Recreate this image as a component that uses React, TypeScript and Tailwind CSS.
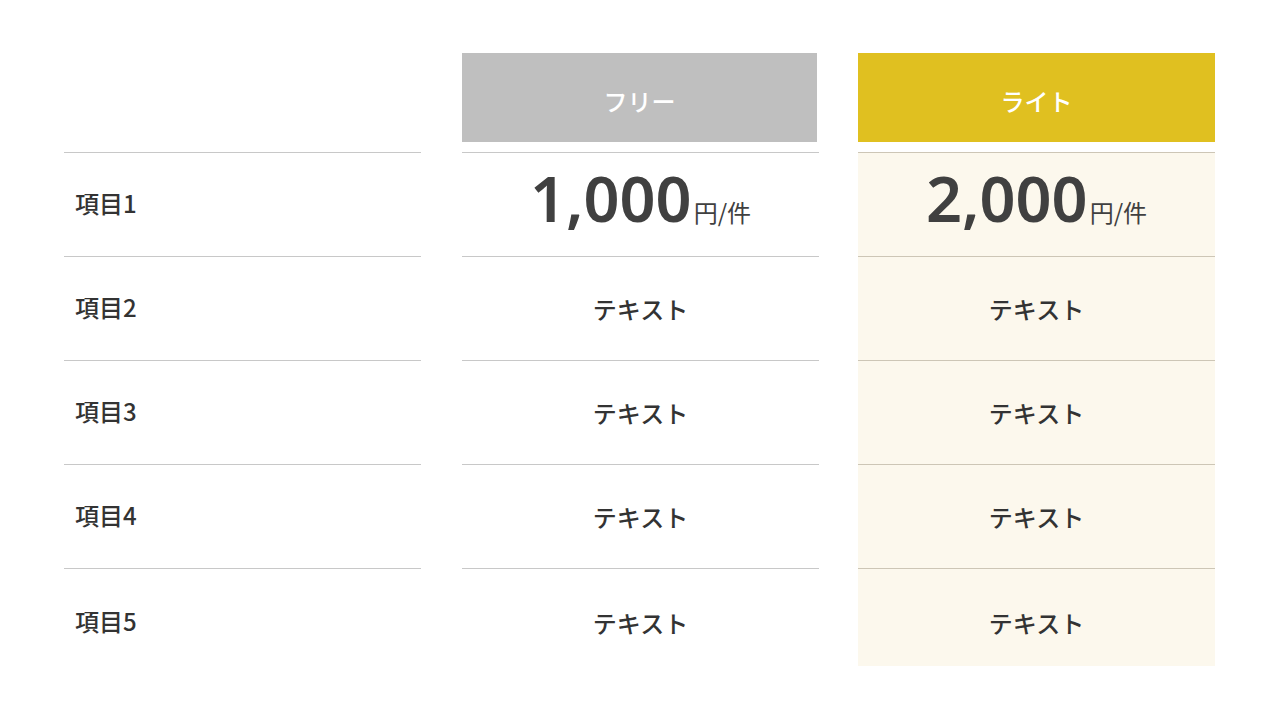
import React from 'react';

const jp = { fontFamily: '"Noto Sans CJK JP", "Noto Sans", sans-serif' };

const rows = ['項目1', '項目2', '項目3', '項目4', '項目5'];

interface PlanProps {
  name: string;
  price: string;
  headerClass: string;
  bodyClass: string;
}

const Cell: React.FC<{ last?: boolean; children: React.ReactNode; center?: boolean }> = ({ last, children, center }) => (
  <div
    className={`border-t border-[#c8c8c8] flex items-center ${center ? 'justify-center' : 'pl-[11px]'} ${
      last ? 'h-[98px] pt-[11px]' : 'h-[104px]'
    }`}
  >
    {children}
  </div>
);

const Plan: React.FC<PlanProps> = ({ name, price, headerClass, bodyClass }) => (
  <div className="w-[357px] flex flex-col">
    <div className={`h-[89px] flex items-center justify-center pt-[6px] text-white text-[24px] font-medium ${headerClass}`}>
      {name}
    </div>
    <div className={`mt-[10px] ${bodyClass}`}>
      <Cell center>
        <div className="flex items-baseline text-[#404040] pb-[14px]">
          <span className="text-[63px] font-semibold leading-none" style={{ fontFamily: '"Noto Sans", sans-serif' }}>
            {price}
          </span>
          <span className="text-[24px] ml-[2px]">円/件</span>
        </div>
      </Cell>
      {[1, 2, 3].map(i => (
        <Cell key={i} center>
          <span className="text-[24px] font-medium text-[#333]">テキスト</span>
        </Cell>
      ))}
      <Cell center last>
        <span className="text-[24px] font-medium text-[#333]">テキスト</span>
      </Cell>
    </div>
  </div>
);

export default function App() {
  return (
    <div className="w-[1280px] h-[720px] bg-white flex pl-[64px] pt-[53px]" style={jp}>
      <div className="w-[357px] flex flex-col mr-[41px]">
        <div className="h-[89px]" />
        <div className="mt-[10px]">
          {rows.map((r, i) => (
            <Cell key={r} last={i === rows.length - 1}>
              <span className="text-[24px] font-medium text-[#333] pb-[4px]">{r}</span>
            </Cell>
          ))}
        </div>
      </div>
      <div className="mr-[39px] flex">
        <Plan name="フリー" price="1,000" headerClass="bg-[#bfbfbf] w-[355px]" bodyClass="" />
      </div>
      <Plan name="ライト" price="2,000" headerClass="bg-[#e0c020] w-[357px]" bodyClass="bg-[#fcf8ed] [&>div]:border-[#cdc6b6]" />
    </div>
  );
}
